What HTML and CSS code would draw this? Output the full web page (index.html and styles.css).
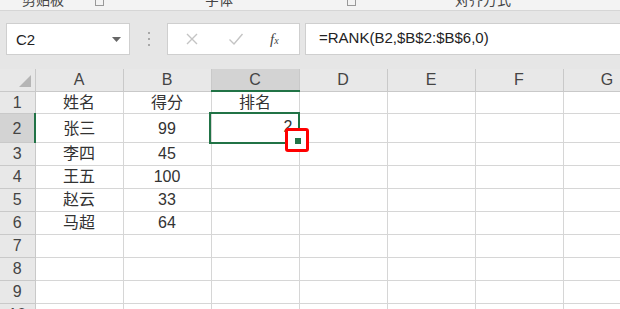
FILE: index.html
```html
<!DOCTYPE html>
<html>
<head>
    <meta charset="UTF-8">
    <title>RANK</title>
    <link rel="stylesheet" href="styles.css">
</head>
<body>
    <!-- Ribbon group labels (cut off at the top) -->
    <div class="ribbon">
        <span class="group g-clip">剪贴板</span>
        <span class="launcher l-clip"></span>
        <span class="group g-font">字体</span>
        <span class="launcher l-font"></span>
        <span class="group g-align">对齐方式</span>
    </div>

    <!-- Formula bar -->
    <div class="formula-bar">
        <div class="name-box">
            <span>C2</span>
            <svg width="9" height="5" viewBox="0 0 9 5"><path d="M0 0h9L4.5 5z" fill="#666"/></svg>
        </div>
        <div class="grip"><i></i><i></i><i></i></div>
        <div class="fx-buttons">
            <svg width="14" height="14" viewBox="0 0 14 14"><path d="M2 2l10 10M12 2L2 12" stroke="#c4c4c4" stroke-width="1.4" fill="none"/></svg>
            <svg width="16" height="14" viewBox="0 0 16 14"><path d="M1.5 7.5l4.5 4.5L14.5 2" stroke="#c4c4c4" stroke-width="1.4" fill="none"/></svg>
            <span class="fx">f<sub>x</sub></span>
        </div>
        <div class="formula">=RANK(B2,$B$2:$B$6,0)</div>
    </div>

    <!-- Sheet -->
    <div class="sheet">
        <table class="grid">
            <colgroup>
                <col class="c-head">
                <col><col><col><col><col><col><col>
            </colgroup>
            <tr class="hdr">
                <th class="corner"><span class="tri"></span></th>
                <th>A</th><th>B</th><th class="active-col">C</th><th>D</th><th>E</th><th>F</th><th>G</th>
            </tr>
            <tr class="r1"><th>1</th><td>姓名</td><td>得分</td><td>排名</td><td></td><td></td><td></td><td></td></tr>
            <tr class="r2"><th class="active-row">2</th><td>张三</td><td>99</td><td class="num">2</td><td></td><td></td><td></td><td></td></tr>
            <tr><th>3</th><td>李四</td><td>45</td><td></td><td></td><td></td><td></td><td></td></tr>
            <tr><th>4</th><td>王五</td><td>100</td><td></td><td></td><td></td><td></td><td></td></tr>
            <tr><th>5</th><td>赵云</td><td>33</td><td></td><td></td><td></td><td></td><td></td></tr>
            <tr><th>6</th><td>马超</td><td>64</td><td></td><td></td><td></td><td></td><td></td></tr>
            <tr><th>7</th><td></td><td></td><td></td><td></td><td></td><td></td><td></td></tr>
            <tr><th>8</th><td></td><td></td><td></td><td></td><td></td><td></td><td></td></tr>
            <tr><th>9</th><td></td><td></td><td></td><td></td><td></td><td></td><td></td></tr>
            <tr><th>10</th><td></td><td></td><td></td><td></td><td></td><td></td><td></td></tr>
        </table>

        <!-- overlays: selection, highlight, fill handle -->
        <div class="selection"></div>
        <div class="callout"></div>
        <div class="fill-handle"></div>
    </div>
</body>
</html>
```

FILE: styles.css
```css
html, body {
    margin: 0;
    padding: 0;
    width: 620px;
    height: 309px;
    overflow: hidden;
    background: #e6e6e6;
    font-family: "Liberation Sans", "Noto Sans CJK SC", sans-serif;
    color: #333;
}

/* ribbon bottom strip */
.ribbon {
    position: relative;
    height: 10px;
    background: #f3f3f3;
    border-bottom: 1px solid #d6d6d6;
    overflow: hidden;
}

.group {
    position: absolute;
    top: -8px;
    font-size: 14px;
    line-height: 16px;
    color: #444;
}

.g-clip { left: 22px; }
.g-font { left: 205px; }
.g-align { left: 455px; }

.launcher {
    position: absolute;
    top: -4px;
    width: 7px;
    height: 9px;
    border: 1px solid #999;
    border-top: none;
}

.l-clip { left: 95px; }
.l-font { left: 347px; }

/* formula bar */
.formula-bar {
    display: flex;
    align-items: center;
    height: 32px;
    padding: 12px 0 14px 6px;
}

.name-box {
    display: flex;
    align-items: center;
    justify-content: space-between;
    box-sizing: border-box;
    width: 124px;
    height: 32px;
    padding: 0 8px 0 9px;
    background: #fff;
    border: 1px solid #cfcfcf;
    font-size: 15px;
    color: #222;
}

.grip {
    display: flex;
    flex-direction: column;
    gap: 4px;
    width: 37px;
    align-items: center;
}

.grip i {
    display: block;
    width: 2px;
    height: 2px;
    background: #a8a8a8;
}

.fx-buttons {
    display: flex;
    align-items: center;
    box-sizing: border-box;
    width: 133px;
    height: 32px;
    padding: 0 14px 0 17px;
    gap: 29px;
    background: #fff;
    border: 1px solid #cfcfcf;
}

.fx {
    font-family: "Liberation Serif", serif;
    font-style: italic;
    font-size: 15px;
    color: #444;
    margin-left: -3px;
}

.fx sub {
    font-size: 10px;
    vertical-align: 0;
}

.formula {
    flex: 1;
    box-sizing: border-box;
    height: 32px;
    margin-left: 5px;
    margin-right: -4px;
    padding: 5px 0 0 13px;
    background: #fff;
    border: 1px solid #cfcfcf;
    font-size: 15px;
    color: #222;
}

/* sheet */
.sheet {
    position: relative;
    height: 240px;
    overflow: hidden;
    background: #fff;
}

.grid {
    table-layout: fixed;
    width: 651px;
    border-collapse: collapse;
    font-size: 16px;
    line-height: 18px;
}

.grid col { width: 88px; }
.grid col.c-head { width: 35px; }

.grid th,
.grid td {
    padding: 0;
    border: 1px solid #d6d6d6;
    text-align: center;
    font-weight: normal;
    white-space: nowrap;
    overflow: hidden;
}

.grid th {
    background: #e8e8e8;
    border-color: #c9c9c9;
    color: #444;
}

.grid td { color: #333; }

.grid tr { height: 23px; }
.grid tr.hdr { height: 22px; }
.grid tr.r1 { height: 22px; }
.grid tr.r2 { height: 29px; }

.grid tr.r1 th,
.grid tr.r1 td,
.grid tr.r2 th,
.grid tr.r2 td {
    padding-top: 2px;
}

.grid tr:first-child th { border-top: none; }
.grid th:first-child { border-left: none; }

.grid th.active-col {
    background: #d3d3d3;
    border-bottom: 2px solid #217346;
}

.grid th.active-row {
    background: #d3d3d3;
    border-right: 2px solid #217346;
}

.grid tr.r2 td.num {
    text-align: right;
    vertical-align: top;
    padding: 4px 6px 0 0;
}

.corner {
    position: relative;
}

.tri {
    position: absolute;
    right: 4px;
    bottom: 4px;
    width: 0;
    height: 0;
    border-left: 12px solid transparent;
    border-bottom: 12px solid #b5b5b5;
}

.selection {
    position: absolute;
    left: 209px;
    top: 43px;
    width: 91px;
    height: 32px;
    box-sizing: border-box;
    border: 2px solid #217346;
}

.callout {
    position: absolute;
    left: 285px;
    top: 59px;
    width: 24px;
    height: 24px;
    box-sizing: border-box;
    background: #fff;
    border: 3px solid #f00;
    border-radius: 3px;
}

.fill-handle {
    position: absolute;
    left: 294px;
    top: 68px;
    width: 6px;
    height: 6px;
    background: #217346;
    border: 1px solid #fff;
}
```
